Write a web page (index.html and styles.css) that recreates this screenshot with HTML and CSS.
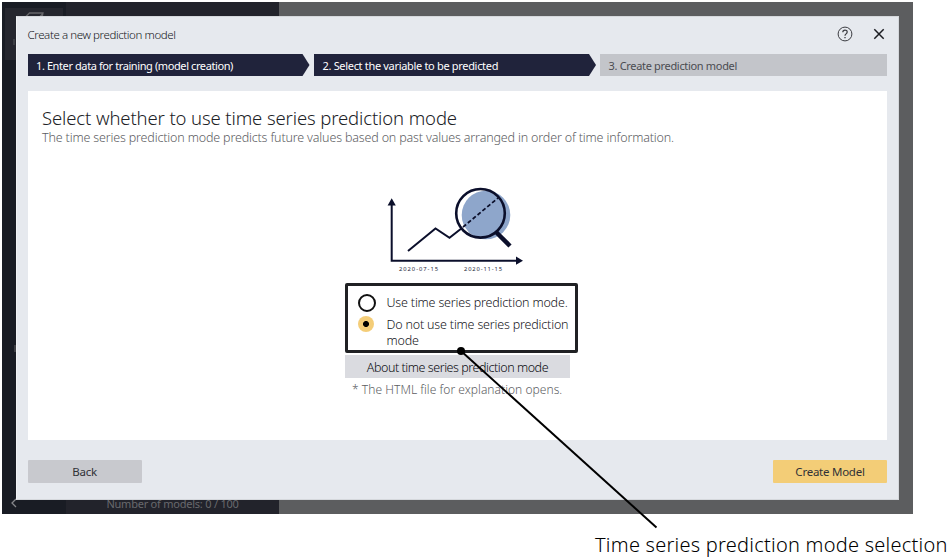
FILE: index.html
```html
<!DOCTYPE html>
<html lang="en">
<head>
<meta charset="utf-8">
<title>Create a new prediction model</title>
<link rel="stylesheet" href="styles.css">
</head>
<body>
<div class="app">
  <aside class="rail">
    <div class="tile">
      <svg class="tile-icon" width="56" height="44" viewBox="0 0 56 44"><path d="M18 8.500 24.500 2H38L36.500 9M18 8.500H32L38 2.500" fill="none" stroke="#66666a" stroke-width="1.300"/><path d="M9 28V34" stroke="#55565a" stroke-width="1"/></svg>
    </div>
    <i class="mark"></i>
    <svg class="collapse" width="8" height="10" viewBox="0 0 8 10"><path d="M6 1 2 5 6 9" fill="none" stroke="#85868a" stroke-width="1.300"/></svg>
  </aside>
  <section class="models"><span class="count">Number of models: 0 / 100</span></section>
  <main class="workspace"></main>

  <div class="dialog">
    <header class="head">
      <h1 class="title">Create a new prediction model</h1>
      <div class="tools">
        <svg width="16" height="16" viewBox="0 0 16 16" fill="none" stroke="#3c3d42"><circle cx="8" cy="8" r="6.900" stroke-width="1"/><path d="M5.800 6.200C5.800 3.400 10.200 3.400 10.200 6.100C10.200 7.900 8 7.800 8 9.700" stroke-width="1.200"/><path d="M8 10.900V12.200" stroke-width="1.300"/></svg>
        <svg width="12" height="12" viewBox="0 0 12 12"><path d="M1.300 1.300 10.700 10.700M10.700 1.300 1.300 10.700" stroke="#1c1d22" stroke-width="1.500"/></svg>
      </div>
    </header>
    <ol class="steps">
      <li class="step done first"><span>1. Enter data for training (model creation)</span></li>
      <li class="step done"><span>2. Select the variable to be predicted</span></li>
      <li class="step"><span>3. Create prediction model</span></li>
    </ol>
    <div class="content">
      <h2 class="heading"><span>Select whether to use time series prediction mode</span></h2>
      <p class="lead"><span>The time series prediction mode predicts future values based on past values arranged in order of time information.</span></p>
      <svg class="chart" width="150" height="90" viewBox="380 185 150 90">
        <circle cx="486" cy="215" r="24.300" fill="#8ea6cb"/>
        <path d="M391.700 203V260.700H518" fill="none" stroke="#0b0f2b" stroke-width="2"/>
        <path d="M391.700 198.300 395.800 205.500H387.600ZM523 260.700 516 256.600V264.800Z" fill="#0b0f2b"/>
        <path d="M408 251 435.500 228.500 449.500 237.800 462 228" fill="none" stroke="#0b0f2b" stroke-width="2"/>
        <path d="M463 227 498 198" stroke="#0b0f2b" stroke-width="1.800" stroke-dasharray="4 2.300"/>
        <circle cx="480.500" cy="213.300" r="24.300" fill="none" stroke="#0b0f2b" stroke-width="2.600"/>
        <path d="M496.500 232.500 510 246" stroke="#0b0f2b" stroke-width="4.500"/>
        <text class="tick" x="399" y="270.500" textLength="39">2020-07-15</text>
        <text class="tick" x="464" y="270.500" textLength="38">2020-11-15</text>
      </svg>
      <div class="choices">
        <div class="choice"><i class="radio"></i><span>Use time series prediction mode.</span></div>
        <div class="choice"><i class="radio on"></i><span>Do not use time series prediction<br>mode</span></div>
      </div>
      <div class="about"><span>About time series prediction mode</span></div>
      <p class="note"><span>* The HTML file for explanation opens.</span></p>
    </div>
    <footer class="foot">
      <div class="btn"><span>Back</span></div>
      <div class="btn primary"><span>Create Model</span></div>
    </footer>
  </div>
</div>
<p class="caption"><span>Time series prediction mode selection</span></p>
<svg class="leader" width="210" height="190" viewBox="450 340 210 190"><circle cx="461" cy="351" r="4" fill="#000"/><path d="M461 351 656.500 527.500" stroke="#000" stroke-width="2"/></svg>
</body>
</html>
```
FILE: styles.css
```css
* { box-sizing: border-box; }
body { margin: 0; width: 949px; height: 558px; overflow: hidden; background: #fff; font-family: "Noto Sans", "Open Sans", sans-serif; font-size: 12px; color: #303136; }
h1, h2, p, ol { margin: 0; padding: 0; font-weight: 300; list-style: none; }
span { white-space: nowrap; }
.app { position: relative; display: grid; grid-template-columns: 64px 213px 1fr; width: 911px; height: 512px; margin: 2px 0 0 2px; background: #5c5d5f; }
.rail { display: flex; flex-direction: column; background: #191c24; padding: 6px 3px 6px; }
.tile { height: 52px; padding-top: 3px; background: #25262e; }
.mark { width: 2px; height: 7px; margin: 285px 0 0 9px; background: #3e3f44; }
.collapse { margin: auto 0 0 5px; }
.models { display: flex; align-items: flex-end; justify-content: center; background: #22232b; padding-bottom: 2px; color: #68696d; }
.count { line-height: 16px; font-size: 11px; letter-spacing: -.23px; }
.dialog { position: absolute; left: 14px; top: 14px; width: 883px; height: 484px; padding: 0 11px 0 10.5px; display: flex; flex-direction: column; background: #e6e9ee; border: 1px solid #d5d8dc; border-left-color: #f1f3f5; }
.head { display: flex; align-items: center; justify-content: space-between; height: 37px; }
.title { padding-bottom: 2px; font-size: 11.5px; line-height: 18px; letter-spacing: -.4px; color: #15161b; }
.tools { display: flex; align-items: center; gap: 20px; padding: 0 2px 3px 0; }
.steps { display: grid; grid-template-columns: 283.5px 283px 287px; gap: 3px; height: 22px; }
.step { display: flex; align-items: center; padding: 1px 0 0 8.5px; font-size: 11px; font-weight: 400; letter-spacing: -.32px; background: #c3c5ca; color: #4b4c51; }
.done { background: #20233b; color: #fff; clip-path: polygon(0 0, 275px 0, 282px 50%, 275px 100%, 0 100%); }
.first { letter-spacing: -.4px; }
.content { margin-top: 15px; height: 349px; background: #fff; padding: 15px 14.5px; display: flex; flex-direction: column; }
.heading { font-size: 18.5px; line-height: 24px; letter-spacing: -.12px; color: #202126; }
.lead { font-size: 12.5px; line-height: 16px; letter-spacing: -.16px; color: #5c5d62; }
.chart { margin: 39px 0 0 338px; flex: none; }
.tick { font-size: 5.8px; fill: #1b1e38; }
.choices { width: 233px; height: 70px; margin: 8px 0 0 303px; padding: 9px 0 0 9.5px; border: 3px solid #202124; border-radius: 2px; flex: none; }
.choice { display: flex; line-height: 16px; margin-bottom: 6.400px; font-size: 12.5px; letter-spacing: -.18px; font-weight: 300; color: #15161b; }
.radio { width: 18px; height: 18px; margin: -1px 11px -1px 0; border: 2px solid #111; border-radius: 50%; flex: none; }
.radio.on { width: 16px; height: 16px; margin: -1px 13px 0 0; border: 0; background: radial-gradient(circle, #000 2.600px, #f4cd78 3.400px); }
.about { width: 225px; height: 23px; margin: 2px 0 0 303px; background: #dadbe0; text-align: center; line-height: 25px; font-size: 12.5px; font-weight: 300; letter-spacing: -.45px; color: #0a0b10; }
.note { margin-left: 310px; line-height: 23px; color: #5c5d62; letter-spacing: .04px; }
.foot { display: flex; justify-content: space-between; margin-top: 20px; }
.btn { width: 114px; height: 23px; line-height: 24px; text-align: center; background: #c8c9ce; border-radius: 1px; font-size: 11.5px; letter-spacing: -.25px; }
.primary { background: #f3cd77; }
.caption { margin: 17px 0 0 595px; font-size: 20px; line-height: 28px; letter-spacing: .24px; color: #000; }
.leader { position: absolute; left: 450px; top: 340px; }
```
